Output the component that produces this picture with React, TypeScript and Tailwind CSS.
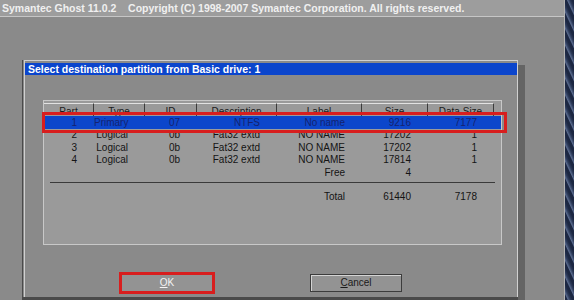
const cols = "grid grid-cols-[50px_51px_52px_80px_85px_66px_66px]";

const headers = ["Part", "Type", "ID", "Description", "Label", "Size", "Data Size"];

const rows = [
  ["2", "Logical", "0b", "Fat32 extd", "NO NAME", "17202", "1"],
  ["3", "Logical", "0b", "Fat32 extd", "NO NAME", "17202", "1"],
  ["4", "Logical", "0b", "Fat32 extd", "NO NAME", "17814", "1"],
  ["", "", "", "", "Free", "4", ""],
];

function Cells({ values }: { values: string[] }) {
  return (
    <>
      {values.map((v, i) => (
        <div key={i} className="pr-[17px] text-right whitespace-nowrap">
          {v}
        </div>
      ))}
    </>
  );
}

export default function App() {
  return (
    <div className="flex h-[300px] w-[574px] overflow-hidden bg-[#8a8a8a] font-['Liberation_Sans',Arial,sans-serif]">
      <div className="flex w-[564px] flex-col">
        {/* Top status bar */}
        <header className="h-[17px] border-b border-[#c6c6c6] bg-[#9d9d9d] pl-[2px] text-[10.5px] font-bold leading-[16px] whitespace-pre text-[#f0f0f0]">
          Symantec Ghost 11.0.2    Copyright (C) 1998-2007 Symantec Corporation. All rights reserved.
        </header>

        {/* Dialog */}
        <div className="flex flex-1 pl-[22px] pt-[43px]">
          <div className="flex w-[496px] flex-col border-l border-b-[3px] border-[#4a4a4a] pl-px">
            <div className="flex flex-1 flex-col border-t border-r border-l border-[#d0d0d0] pt-[2px]">
              <div className="h-[12px] bg-[#0b45cc] pl-[3px] text-[10.5px] font-bold leading-[12px] text-white">
                Select destination partition from Basic drive: 1
              </div>

              {/* Partition table */}
              <div className="mt-[25px] ml-[18px] h-[145px] w-[459px] border border-[#c8c8c8] bg-[#9a9a9a] pt-[2px] text-[10px] text-[#141414]">
                <div className={`${cols} h-[13px] leading-[16px] text-[#1c1c1c]`}>
                  {headers.map((h) => (
                    <div
                      key={h}
                      className="overflow-hidden border-t border-r border-t-[#e2e2e2] border-r-[#3c3c3c] text-center"
                    >
                      {h}
                    </div>
                  ))}
                </div>

                <div className={`${cols} relative h-[13px] bg-[#0c46cb] leading-[13px] text-[#15226f]`}>
                  <Cells values={["1", "Primary", "07", "NTFS", "No name", "9216", "7177"]} />
                  <div className="absolute -top-[4px] -bottom-[4px] -left-[2px] -right-[6px] border-[3px] border-[#d81e1e]" />
                </div>

                {rows.map((r, i) => (
                  <div key={i} className={`${cols} h-[12.5px] leading-[12.5px]`}>
                    <Cells values={r} />
                  </div>
                ))}

                <div className="mx-[6px] mt-[3px] h-px bg-[#3a3a3a]" />

                <div className={`${cols} mt-[8px] h-[12.5px] leading-[12.5px]`}>
                  <Cells values={["", "", "", "", "Total", "61440", "7178"]} />
                </div>
              </div>

              {/* Buttons */}
              <div className="mt-[29px] flex pl-[96px] text-[10px]">
                <button className="relative h-[18px] w-[92px] border border-t-[#dcdcdc] border-l-[#dcdcdc] border-r-[#4a4a4a] border-b-[#4a4a4a] bg-[#939393] leading-[16px] text-[#f4f4f4]">
                  <span className="underline">O</span>K
                  <span className="absolute -inset-[3px] border-[3px] border-[#d81e1e]" />
                </button>
                <button className="ml-[97px] h-[18px] w-[92px] border border-[#3c3c3c] bg-[#939393] leading-[16px] text-[#1a1a1a] shadow-[inset_1px_1px_0_#d4d4d4]">
                  <span className="underline">C</span>ancel
                </button>
              </div>
            </div>
          </div>
          {/* Dialog shadow */}
          <div className="mt-[5px] w-[7px] bg-[#646464]" />
        </div>
      </div>

      {/* Desktop edge */}
      <div className="w-[10px] border-l border-[#b4b4b4] bg-[repeating-linear-gradient(65deg,#1c2742_0px,#1c2742_2px,#5a6b8e_3px,#2d3b5a_5px,#1c2742_7px)]" />
    </div>
  );
}
